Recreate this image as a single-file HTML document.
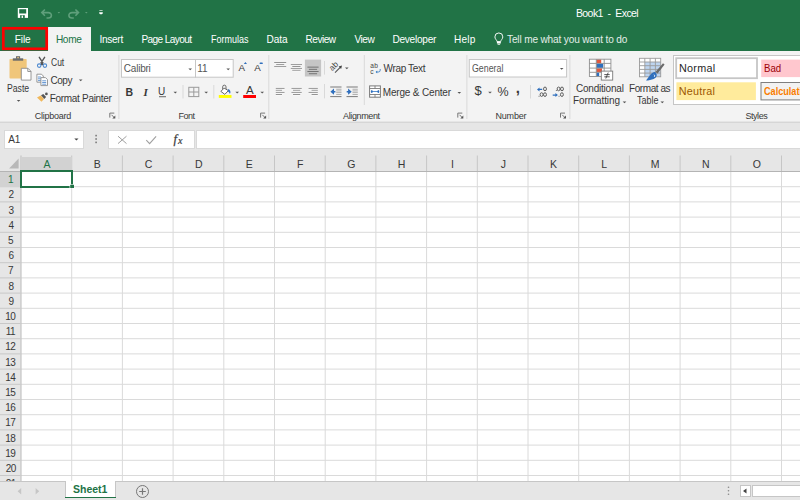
<!DOCTYPE html>
<html><head><meta charset="utf-8"><style>
*{margin:0;padding:0;box-sizing:border-box}
html,body{width:800px;height:500px;overflow:hidden}
body{position:relative;background:#fff;font-family:"Liberation Sans",sans-serif}
.a{position:absolute}
.t{position:absolute;white-space:pre;line-height:20px}
svg{position:absolute;left:0;top:0;overflow:visible}
</style></head><body>
<div class="a" style="left:0px;top:0px;width:800px;height:51px;background:#217346"></div>
<div class="t" style="left:575.90px;top:2.95px;font-size:10.5px;color:#ffffff;letter-spacing:-0.557px;">Book1  -  Excel</div>
<svg width="120" height="27">
<rect x="17.8" y="8" width="10.2" height="9.9" fill="#fff"/>
<rect x="19.2" y="9.2" width="7" height="4.3" fill="#217346"/>
<rect x="20.1" y="15.2" width="4.7" height="2.7" fill="#217346"/>
<rect x="21.6" y="15.6" width="1.4" height="2.3" fill="#fff"/>
<g fill="none" stroke="#5f9f7b" stroke-width="1.6">
<path d="M44.9 9.5L41.8 12.6L44.9 15.7M42 12.6H48.3A3.1 2.7 0 0 1 48.3 18H46.5"/>
<path d="M75.4 9.5L78.5 12.6L75.4 15.7M78.3 12.6H72A3.1 2.7 0 0 0 72 18H73.8"/>
</g>
<g fill="#5f9f7b"><path d="M57.6 12h2.6l-1.3 1.5z"/><path d="M85 12h2.6l-1.3 1.5z"/></g>
<g fill="#fff"><rect x="99.4" y="10.1" width="3.2" height="0.9" opacity="0.7"/><path d="M99.2 12.2h3.6v1.3l-1.8 1.1l-1.8-1.1z"/></g>
</svg>
<div class="a" style="left:48px;top:27px;width:43px;height:24px;background:#f3f3f3"></div>
<svg width="60" height="60"><rect x="3.3" y="28.3" width="43.4" height="20.5" fill="none" stroke="#ff0000" stroke-width="2.7"/></svg>
<div class="t" style="left:14.75px;top:29.99px;font-size:10.1px;color:#ffffff;letter-spacing:-0.117px;">File</div>
<div class="t" style="left:55.90px;top:29.99px;font-size:10.1px;color:#217346;letter-spacing:-0.333px;">Home</div>
<div class="t" style="left:99.40px;top:29.99px;font-size:10.1px;color:#ffffff;letter-spacing:-0.280px;">Insert</div>
<div class="t" style="left:141.40px;top:29.99px;font-size:10.1px;color:#ffffff;letter-spacing:-0.600px;">Page Layout</div>
<div class="t" style="left:210.51px;top:29.99px;font-size:10.1px;color:#ffffff;transform:scaleX(0.8927);transform-origin:0 0;">Formulas</div>
<div class="t" style="left:266.60px;top:29.99px;font-size:10.1px;color:#ffffff;letter-spacing:-0.067px;">Data</div>
<div class="t" style="left:305.60px;top:29.99px;font-size:10.1px;color:#ffffff;letter-spacing:-0.520px;">Review</div>
<div class="t" style="left:354.40px;top:29.99px;font-size:10.1px;color:#ffffff;letter-spacing:-0.467px;">View</div>
<div class="t" style="left:392.40px;top:29.99px;font-size:10.1px;color:#ffffff;letter-spacing:-0.250px;">Developer</div>
<div class="t" style="left:454.00px;top:29.99px;font-size:10.1px;color:#ffffff;letter-spacing:0.167px;">Help</div>
<div class="t" style="left:507.00px;top:29.99px;font-size:10.1px;color:#e4eee8;letter-spacing:-0.162px;">Tell me what you want to do</div>
<svg width="800" height="60"><g fill="none" stroke="#fff" stroke-width="0.95">
<path d="M497 41.6c-0.1-1.6-2.1-2.6-2.1-4.7a3.95 3.95 0 0 1 7.9 0c0 2.1-2 3.1-2.1 4.7z"/></g>
<rect x="496.9" y="41.8" width="3.9" height="1.7" fill="#fff"/><rect x="497.6" y="43.7" width="2.5" height="1.2" fill="#cfe0d6"/></svg>
<div class="a" style="left:0px;top:51px;width:800px;height:70px;background:#f3f3f3"></div>
<div class="a" style="left:0px;top:120.5px;width:800px;height:1px;background:#e6e6e6"></div>
<div class="a" style="left:0px;top:121.5px;width:800px;height:1px;background:#d6d6d6"></div>
<svg width="800" height="130">
<rect x="118.4" y="55" width="1" height="64" fill="#d9d9d9"/>
<rect x="268.3" y="55" width="1" height="64" fill="#d9d9d9"/>
<rect x="466.4" y="55" width="1" height="64" fill="#d9d9d9"/>
<rect x="569.4" y="55" width="1" height="64" fill="#d9d9d9"/>

<rect x="9.5" y="59" width="17.2" height="19.5" rx="0.8" fill="#f0c67a"/>
<rect x="12.8" y="58.3" width="10.4" height="2.4" fill="#6b6b6b"/>
<rect x="16" y="56.2" width="4.1" height="2.6" fill="#6b6b6b"/>
<rect x="17.3" y="57" width="1.5" height="1.2" fill="#f0c67a"/>
<path d="M21.3 68.3h6.7l3 3v8.8h-9.7z" fill="#fff" stroke="#8c8c8c" stroke-width="0.9"/>
<path d="M27.8 68.3v3.2h3.2" fill="none" stroke="#8c8c8c" stroke-width="0.9"/>

<path d="M16.80 100.00h3.6l-1.80 1.80z" fill="#555"/>

<g stroke="#555" stroke-width="1.4" fill="none" stroke-linecap="round"><path d="M39.3 57.3l3.6 5.6-1.6 1.6M44.6 57.3l-3.6 5.6 1.6 1.6"/></g>
<g stroke="#4b88cf" stroke-width="1.05" fill="none"><circle cx="39.2" cy="65.6" r="1.75"/><circle cx="44.9" cy="65.6" r="1.75"/></g>


<path d="M36.9 74.2h4.6l1.8 1.8v6.2h-6.4z" fill="#fff" stroke="#8c8c8c" stroke-width="0.9"/>
<g stroke="#5a8fcf" stroke-width="0.9"><path d="M38 77h3M38 78.8h3M38 80.6h3"/></g>
<path d="M40.9 77.6h4.6l2 2v6h-6.6z" fill="#fff" stroke="#8c8c8c" stroke-width="0.9"/>
<g stroke="#5a8fcf" stroke-width="0.9"><path d="M42.2 80.8h4M42.2 82.5h4M42.2 84.2h4"/></g>

<path d="M78.90 79.50h3.6l-1.80 1.80z" fill="#555"/>

<path d="M37 97.6L40.7 95.6L44 99L41.5 101.8Z" fill="#f0b85c"/>
<path d="M41 95.3L43.3 93.9L46.1 96.9L44.3 99.1Z" fill="#555"/>
<circle cx="46.4" cy="93.9" r="1.35" fill="#555"/>

<g fill="none" stroke="#777" stroke-width="1"><path d="M109.8 117.6v-4.5h4.5"/><path d="M111.5 114.8l3.2 3.2"/></g><path d="M115.3 115.6v3h-3z" fill="#555"/>
<rect x="121.5" y="59.5" width="74" height="17.7" fill="#fff" stroke="#c6c6c6" stroke-width="1"/>
<rect x="195.5" y="59.5" width="37.7" height="17.7" fill="#fff" stroke="#c6c6c6" stroke-width="1"/>
<path d="M188.40 68.40h3.6l-1.80 1.80z" fill="#555"/>
<path d="M226.40 68.40h3.6l-1.80 1.80z" fill="#555"/>
<path d="M243.8 63.9l1.6-1.9 1.6 1.9z" fill="#2f6fbd"/>
<rect x="259.6" y="62.6" width="3.2" height="1.4" rx="0.6" fill="#2f6fbd"/>
<rect x="159" y="96.3" width="7" height="0.9" fill="#555"/>
<path d="M173.50 91.70h3.6l-1.80 1.80z" fill="#555"/>
<path d="M204.40 91.70h3.6l-1.80 1.80z" fill="#555"/>
<path d="M235.40 91.70h3.6l-1.80 1.80z" fill="#555"/>
<path d="M260.40 91.70h3.6l-1.80 1.80z" fill="#555"/>
<rect x="182.5" y="85" width="1" height="13.5" fill="#d9d9d9"/><rect x="213.3" y="85" width="1" height="13.5" fill="#d9d9d9"/>
<g fill="none" stroke="#9a9a9a" stroke-width="1"><rect x="188.8" y="87.3" width="10" height="9.3"/><path d="M193.8 87.3v9.3M188.8 92h10"/></g>
<path d="M222.7 89.4V86.8A1.65 1.65 0 0 1 226 86.8V89.6" fill="none" stroke="#6a6a6a" stroke-width="1"/>
<path d="M220.9 91.4L224.1 88.1L228.4 90.6L224.8 94.4Z" fill="#fff" stroke="#666" stroke-width="1"/>
<path d="M228.2 88.9C230.2 89.6 231.2 91.6 229.9 94C229.3 92.6 228.7 91.7 227.9 91.3Z" fill="#2f6fbd"/>
<rect x="218.8" y="95" width="12.7" height="2.9" fill="#ffff00"/>
<rect x="243.2" y="95" width="12.8" height="3" fill="#ff0000"/>
<g fill="none" stroke="#777" stroke-width="1"><path d="M260.6 117.6v-4.5h4.5"/><path d="M262.3 114.8l3.2 3.2"/></g><path d="M266.1 115.6v3h-3z" fill="#555"/>
<rect x="274.2" y="62.05" width="12" height="0.95" fill="#8f8f8f"/>
<rect x="274.2" y="63.0" width="12" height="0.6" fill="#ffffff" opacity="0.7"/>
<rect x="276.2" y="64.14999999999999" width="8" height="0.95" fill="#8f8f8f"/>
<rect x="276.2" y="65.1" width="8" height="0.6" fill="#ffffff" opacity="0.7"/>
<rect x="274.2" y="66.14999999999999" width="12" height="0.95" fill="#8f8f8f"/>
<rect x="274.2" y="67.1" width="12" height="0.6" fill="#ffffff" opacity="0.7"/>
<rect x="290.8" y="64.14999999999999" width="11.2" height="0.95" fill="#8f8f8f"/>
<rect x="290.8" y="65.1" width="11.2" height="0.6" fill="#ffffff" opacity="0.7"/>
<rect x="292.3" y="66.05" width="8.2" height="0.95" fill="#8f8f8f"/>
<rect x="292.3" y="67.0" width="8.2" height="0.6" fill="#ffffff" opacity="0.7"/>
<rect x="290.8" y="67.95" width="11.2" height="0.95" fill="#8f8f8f"/>
<rect x="290.8" y="68.9" width="11.2" height="0.6" fill="#ffffff" opacity="0.7"/>
<rect x="292.3" y="69.85" width="8.2" height="0.95" fill="#8f8f8f"/>
<rect x="292.3" y="70.8" width="8.2" height="0.6" fill="#ffffff" opacity="0.7"/>
<rect x="304.9" y="59.6" width="16.2" height="16.9" fill="#c5c5c5"/>
<rect x="307.4" y="66.64999999999999" width="11.2" height="0.95" fill="#707070"/>
<rect x="308.9" y="68.85" width="8.2" height="0.95" fill="#707070"/>
<rect x="307.4" y="71.05" width="11.2" height="0.95" fill="#707070"/>
<rect x="308.9" y="73.25" width="8.2" height="0.95" fill="#707070"/>
<rect x="275.8" y="87.95" width="8.7" height="0.95" fill="#8f8f8f"/>
<rect x="275.8" y="88.9" width="8.7" height="0.6" fill="#ffffff" opacity="0.7"/>
<rect x="275.8" y="89.85" width="6.2" height="0.95" fill="#8f8f8f"/>
<rect x="275.8" y="90.8" width="6.2" height="0.6" fill="#ffffff" opacity="0.7"/>
<rect x="275.8" y="91.95" width="8.7" height="0.95" fill="#8f8f8f"/>
<rect x="275.8" y="92.9" width="8.7" height="0.6" fill="#ffffff" opacity="0.7"/>
<rect x="275.8" y="94.05" width="6.2" height="0.95" fill="#8f8f8f"/>
<rect x="275.8" y="95.0" width="6.2" height="0.6" fill="#ffffff" opacity="0.7"/>
<rect x="291.5" y="87.95" width="10.2" height="0.95" fill="#8f8f8f"/>
<rect x="291.5" y="88.9" width="10.2" height="0.6" fill="#ffffff" opacity="0.7"/>
<rect x="293" y="89.85" width="7.2" height="0.95" fill="#8f8f8f"/>
<rect x="293" y="90.8" width="7.2" height="0.6" fill="#ffffff" opacity="0.7"/>
<rect x="291.5" y="91.95" width="10.2" height="0.95" fill="#8f8f8f"/>
<rect x="291.5" y="92.9" width="10.2" height="0.6" fill="#ffffff" opacity="0.7"/>
<rect x="293" y="94.05" width="7.2" height="0.95" fill="#8f8f8f"/>
<rect x="293" y="95.0" width="7.2" height="0.6" fill="#ffffff" opacity="0.7"/>
<rect x="308.6" y="87.95" width="9.2" height="0.95" fill="#8f8f8f"/>
<rect x="308.6" y="88.9" width="9.2" height="0.6" fill="#ffffff" opacity="0.7"/>
<rect x="311.6" y="89.85" width="6.2" height="0.95" fill="#8f8f8f"/>
<rect x="311.6" y="90.8" width="6.2" height="0.6" fill="#ffffff" opacity="0.7"/>
<rect x="308.6" y="91.95" width="9.2" height="0.95" fill="#8f8f8f"/>
<rect x="308.6" y="92.9" width="9.2" height="0.6" fill="#ffffff" opacity="0.7"/>
<rect x="311.6" y="94.05" width="6.2" height="0.95" fill="#8f8f8f"/>
<rect x="311.6" y="95.0" width="6.2" height="0.6" fill="#ffffff" opacity="0.7"/>
<rect x="324" y="61" width="1" height="13.6" fill="#d9d9d9"/><rect x="324" y="84" width="1" height="14.4" fill="#d9d9d9"/>
<rect x="363.8" y="55" width="1" height="50" fill="#d9d9d9"/>
<text x="0" y="0" transform="translate(332.2,71.2) rotate(-45)" font-family="Liberation Sans" font-size="8.2" fill="#444">ab</text>
<path d="M335 72.6l5.2-5.2" stroke="#555" stroke-width="1.1"/><path d="M342 65.6l-3.4 0.9 2.5 2.5z" fill="#444"/>
<path d="M345.00 67.40h3.6l-1.80 1.80z" fill="#555"/>
<rect x="330.2" y="86.5" width="11.3" height="1" fill="#7a7a7a"/>
<rect x="330.2" y="96.1" width="11.3" height="1" fill="#7a7a7a"/>
<rect x="336.2" y="88.8" width="5.3" height="0.8" fill="#a0a0a0"/>
<rect x="336.2" y="90.55" width="5.3" height="0.8" fill="#a0a0a0"/>
<rect x="336.2" y="92.3" width="5.3" height="0.8" fill="#a0a0a0"/>
<rect x="336.2" y="94.05" width="5.3" height="0.8" fill="#a0a0a0"/>
<path d="M330.4 91.7L334.0 88.6V90.9H335.4V92.5H334.0V94.8Z" fill="#2f6fbd"/>
<rect x="346.5" y="86.5" width="11.3" height="1" fill="#7a7a7a"/>
<rect x="346.5" y="96.1" width="11.3" height="1" fill="#7a7a7a"/>
<rect x="352.5" y="88.8" width="5.3" height="0.8" fill="#a0a0a0"/>
<rect x="352.5" y="90.55" width="5.3" height="0.8" fill="#a0a0a0"/>
<rect x="352.5" y="92.3" width="5.3" height="0.8" fill="#a0a0a0"/>
<rect x="352.5" y="94.05" width="5.3" height="0.8" fill="#a0a0a0"/>
<path d="M351.7 91.7L348.1 88.6V90.9H346.7V92.5H348.1V94.8Z" fill="#2f6fbd"/>
<text x="370.2" y="67.9" font-family="Liberation Sans" font-size="6.6" fill="#444" letter-spacing="0.3">ab</text>
<text x="370.2" y="73.7" font-family="Liberation Sans" font-size="6.6" fill="#444">c</text>
<path d="M380.2 69v1.2a1.8 1.8 0 0 1-1.8 1.8h-2.4" fill="none" stroke="#3b7fc4" stroke-width="0.9"/><path d="M375.6 72l1.6-1.4v2.8z" fill="#3b7fc4"/>
<rect x="369.6" y="85.9" width="10.8" height="11.3" fill="#fff" stroke="#7a7a7a" stroke-width="1"/>
<path d="M369.6 88.5h10.8M369.6 94.5h10.8M375 85.9v2.6M375 94.5v2.7" stroke="#7a7a7a" stroke-width="0.9"/>
<path d="M372 91.5h6" stroke="#4b88cf" stroke-width="0.9"/>
<ellipse cx="371.8" cy="91.5" rx="0.9" ry="1.5" fill="#2f6fbd"/><ellipse cx="378.3" cy="91.5" rx="0.9" ry="1.5" fill="#2f6fbd"/>
<path d="M457.50 92.00h3.6l-1.80 1.80z" fill="#555"/>
<g fill="none" stroke="#777" stroke-width="1"><path d="M457.8 117.6v-4.5h4.5"/><path d="M459.5 114.8l3.2 3.2"/></g><path d="M463.3 115.6v3h-3z" fill="#555"/>
<rect x="469.3" y="59.5" width="97.3" height="17.5" fill="#fff" stroke="#c6c6c6" stroke-width="1"/>
<path d="M559.90 68.00h3.6l-1.80 1.80z" fill="#555"/>
<path d="M488.20 91.70h3.6l-1.80 1.80z" fill="#555"/>
<rect x="530" y="85" width="1" height="13.5" fill="#d9d9d9"/>
<g fill="none" stroke="#555" stroke-width="0.95">
<ellipse cx="545" cy="88.9" rx="1.45" ry="1.85"/><ellipse cx="541.6" cy="94.6" rx="1.45" ry="1.85"/><ellipse cx="545" cy="94.6" rx="1.45" ry="1.85"/>
<ellipse cx="558.6" cy="88.9" rx="1.45" ry="1.85"/><ellipse cx="562" cy="88.9" rx="1.45" ry="1.85"/><ellipse cx="561.9" cy="94.6" rx="1.45" ry="1.85"/></g>
<g fill="#555"><rect x="538.6" y="95.8" width="0.9" height="0.9"/><rect x="555.9" y="90.1" width="0.9" height="0.9"/><rect x="558.6" y="95.8" width="0.9" height="0.9"/></g>
<path d="M537 89.4l2.5-2v1.4h2.7v1.2h-2.7v1.4z" fill="#2f6fbd"/>
<path d="M557.9 95.1l-2.5-2v1.4h-2.7v1.2h2.7v1.4z" fill="#2f6fbd"/>
<g fill="none" stroke="#777" stroke-width="1"><path d="M560.5 117.6v-4.5h4.5"/><path d="M562.2 114.8l3.2 3.2"/></g><path d="M566 115.6v3h-3z" fill="#555"/>
<rect x="589.4" y="59.2" width="21.5" height="17.3" fill="#fff"/>
<rect x="596.4" y="59.4" width="4.8" height="3.8" fill="#e2583e"/>
<rect x="596.4" y="63.6" width="6.8" height="4.3" fill="#2f6fbd"/>
<rect x="596.4" y="68.3" width="5.6" height="3.8" fill="#e2583e"/>
<rect x="596.4" y="72.5" width="2.8" height="3.8" fill="#2f6fbd"/>
<g fill="none" stroke="#8f8f8f" stroke-width="0.9">
<rect x="589.4" y="59.2" width="21.5" height="17.3"/>
<path d="M596.3 59.2v17.3M604.2 59.2v17.3M589.4 63.4h21.5M589.4 68.1h21.5M589.4 72.3h21.5"/></g>
<rect x="601.3" y="71.1" width="11.4" height="9" fill="#fff" stroke="#7a7a7a" stroke-width="0.9"/>
<path d="M604.3 74.6h5.4M604.3 76.8h5.4M608.2 72.6l-2.4 5.9" stroke="#444" stroke-width="0.9"/>
<path d="M622.70 101.40h3.6l-1.80 1.80z" fill="#555"/>
<rect x="639.5" y="58.3" width="21.2" height="18.5" fill="#fff"/>
<rect x="645" y="62" width="15.7" height="14.8" fill="#bdd4ef"/>
<g fill="none" stroke="#9a9a9a" stroke-width="0.9">
<rect x="639.5" y="58.3" width="21.2" height="18.5"/>
<path d="M644.8 58.3v18.5M650.1 58.3v18.5M655.4 58.3v18.5M639.5 62h21.2M639.5 65.7h21.2M639.5 69.4h21.2M639.5 73.1h21.2"/></g>
<path d="M663 63.2L664.6 64.6L657.6 73.6L655.4 72Z" fill="#6a6a6a"/>
<path d="M655.2 72.2C657.4 73.6 657.6 77.3 653.6 78.9C651.6 79.7 648.6 80.2 646 80.6C647.5 78.6 649 76.4 650.6 74.6C652 73 653.6 71.8 655.2 72.2Z" fill="#2f6fbd"/>
<path d="M653.8 74.6C654.8 75 655 76.2 654 77" fill="none" stroke="#fff" stroke-width="0.9"/>
<path d="M660.50 101.40h3.6l-1.80 1.80z" fill="#555"/>
<rect x="673.5" y="55.5" width="140" height="49" fill="#fff" stroke="#c6c6c6" stroke-width="1"/>
<rect x="676.2" y="58.2" width="80.8" height="20" fill="#fff" stroke="#c6c6c6" stroke-width="1.8"/>
<rect x="761.2" y="59.6" width="60" height="17.5" fill="#ffc7ce"/>
<rect x="676.4" y="82.3" width="79.5" height="17.8" fill="#ffeb9c"/>
<rect x="761" y="82.5" width="60" height="17.4" fill="#f2f2f2" stroke="#7f7f7f" stroke-width="1"/>
</svg>
<div class="t" style="left:7.33px;top:79.03px;font-size:10px;color:#383838;transform:scaleX(0.8667);transform-origin:0 0;">Paste</div>
<div class="t" style="left:50.50px;top:53.23px;font-size:10px;color:#383838;transform:scaleX(0.8500);transform-origin:0 0;">Cut</div>
<div class="t" style="left:50.50px;top:70.53px;font-size:10px;color:#383838;letter-spacing:-0.467px;">Copy</div>
<div class="t" style="left:49.80px;top:88.53px;font-size:10px;color:#383838;letter-spacing:-0.315px;">Format Painter</div>
<div class="t" style="left:34.70px;top:105.98px;font-size:9px;color:#383838;letter-spacing:-0.250px;">Clipboard</div>
<div class="t" style="left:123.80px;top:58.63px;font-size:10px;color:#555;letter-spacing:-0.217px;">Calibri</div>
<div class="t" style="left:197.20px;top:58.63px;font-size:10px;color:#555;">11</div>
<div class="t" style="left:238.40px;top:58.10px;font-size:9.8px;color:#383838;">A</div>
<div class="t" style="left:254.20px;top:58.10px;font-size:9.8px;color:#383838;">A</div>
<div class="t" style="left:125.50px;top:81.95px;font-size:10.5px;color:#383838;font-weight:700;">B</div>
<div class="t" style="left:143.60px;top:81.78px;font-size:11px;color:#383838;font-weight:700;font-style:italic;font-family:'Liberation Serif';">I</div>
<div class="t" style="left:158.00px;top:81.73px;font-size:10px;color:#383838;">U</div>
<div class="t" style="left:246.00px;top:80.01px;font-size:11.5px;color:#383838;">A</div>
<div class="t" style="left:178.40px;top:105.98px;font-size:9px;color:#383838;letter-spacing:-0.467px;">Font</div>
<div class="t" style="left:383.50px;top:59.23px;font-size:10px;color:#383838;letter-spacing:-0.337px;">Wrap Text</div>
<div class="t" style="left:382.80px;top:82.73px;font-size:10px;color:#383838;letter-spacing:-0.177px;">Merge &amp; Center</div>
<div class="t" style="left:343.00px;top:105.98px;font-size:9px;color:#383838;letter-spacing:-0.375px;">Alignment</div>
<div class="t" style="left:472.20px;top:58.93px;font-size:10px;color:#555;transform:scaleX(0.8829);transform-origin:0 0;">General</div>
<div class="t" style="left:474.40px;top:81.49px;font-size:13px;color:#383838;">$</div>
<div class="t" style="left:497.60px;top:82.06px;font-size:12.5px;color:#383838;">%</div>
<div class="t" style="left:515.80px;top:78.39px;font-size:15px;color:#383838;font-weight:700;">,</div>
<div class="t" style="left:495.60px;top:105.98px;font-size:9px;color:#383838;letter-spacing:-0.240px;">Number</div>
<div class="t" style="left:575.90px;top:78.83px;font-size:10px;color:#383838;letter-spacing:-0.200px;">Conditional</div>
<div class="t" style="left:572.90px;top:91.43px;font-size:10px;color:#383838;letter-spacing:-0.067px;">Formatting</div>
<div class="t" style="left:629.00px;top:78.83px;font-size:10px;color:#383838;letter-spacing:-0.425px;">Format as</div>
<div class="t" style="left:636.50px;top:91.43px;font-size:10px;color:#383838;transform:scaleX(0.8958);transform-origin:0 0;">Table</div>
<div class="t" style="left:679.00px;top:58.15px;font-size:10.8px;color:#1f1f1f;letter-spacing:0.260px;">Normal</div>
<div class="t" style="left:763.81px;top:58.15px;font-size:10.8px;color:#9c0006;transform:scaleX(0.8944);transform-origin:0 0;">Bad</div>
<div class="t" style="left:678.80px;top:81.45px;font-size:10.8px;color:#9c5700;letter-spacing:0.233px;">Neutral</div>
<div class="t" style="left:764.00px;top:81.45px;font-size:10.8px;color:#fa7d00;font-weight:700;transform:scaleX(0.8448);transform-origin:0 0;">Calculation</div>
<div class="t" style="left:745.40px;top:105.98px;font-size:9px;color:#383838;letter-spacing:-0.440px;">Styles</div>
<div class="a" style="left:0px;top:122.5px;width:800px;height:33px;background:#e6e6e6"></div>
<div class="a" style="left:3.5px;top:129.5px;width:80.8px;height:19px;background:#fff;border:1px solid #d9d9d9"></div>
<div class="t" style="left:8.25px;top:129.93px;font-size:10px;color:#383838;letter-spacing:-0.250px;">A1</div>
<div class="a" style="left:107.5px;top:129.5px;width:87.5px;height:19px;background:#fff;border:1px solid #d9d9d9"></div>
<div class="a" style="left:196px;top:129.5px;width:604px;height:19px;background:#fff;border:1px solid #d9d9d9;border-right:none"></div>
<svg width="800" height="160">
<path d="M74.3 138.4h4.2l-2.1 2.1z" fill="#444"/>
<g fill="#7a7a7a"><rect x="95.3" y="134.8" width="1.6" height="1.6"/><rect x="95.3" y="138.2" width="1.6" height="1.6"/><rect x="95.3" y="141.6" width="1.6" height="1.6"/></g>
<path d="M118 136.2l8.5 7.4M126.5 136.2l-8.5 7.4" stroke="#a0a0a0" stroke-width="1"/>
<path d="M146.3 140.2l3.3 3.5 6.5-7.4" fill="none" stroke="#a0a0a0" stroke-width="1.1"/>
<text x="173.4" y="143.2" font-family="Liberation Serif" font-style="italic" font-size="12.5" fill="#3a3a3a" stroke="#3a3a3a" stroke-width="0.25">f</text>
<text x="177.9" y="143.6" font-family="Liberation Serif" font-style="italic" font-size="10" fill="#3a3a3a" stroke="#3a3a3a" stroke-width="0.2">x</text>
</svg>
<div class="a" style="left:0px;top:155.5px;width:800px;height:16px;background:#e6e6e6"></div>
<div class="a" style="left:0px;top:171px;width:20.5px;height:311px;background:#e6e6e6"></div>
<div class="a" style="left:21px;top:171.5px;width:779px;height:310px;background:#fff"></div>
<svg width="800" height="500">
<line x1="71.7" y1="171.5" x2="71.7" y2="481.5" stroke="#dadada" stroke-width="1"/>
<line x1="122.4" y1="171.5" x2="122.4" y2="481.5" stroke="#dadada" stroke-width="1"/>
<line x1="173.10000000000002" y1="171.5" x2="173.10000000000002" y2="481.5" stroke="#dadada" stroke-width="1"/>
<line x1="223.8" y1="171.5" x2="223.8" y2="481.5" stroke="#dadada" stroke-width="1"/>
<line x1="274.5" y1="171.5" x2="274.5" y2="481.5" stroke="#dadada" stroke-width="1"/>
<line x1="325.20000000000005" y1="171.5" x2="325.20000000000005" y2="481.5" stroke="#dadada" stroke-width="1"/>
<line x1="375.90000000000003" y1="171.5" x2="375.90000000000003" y2="481.5" stroke="#dadada" stroke-width="1"/>
<line x1="426.6" y1="171.5" x2="426.6" y2="481.5" stroke="#dadada" stroke-width="1"/>
<line x1="477.3" y1="171.5" x2="477.3" y2="481.5" stroke="#dadada" stroke-width="1"/>
<line x1="528.0" y1="171.5" x2="528.0" y2="481.5" stroke="#dadada" stroke-width="1"/>
<line x1="578.7" y1="171.5" x2="578.7" y2="481.5" stroke="#dadada" stroke-width="1"/>
<line x1="629.4000000000001" y1="171.5" x2="629.4000000000001" y2="481.5" stroke="#dadada" stroke-width="1"/>
<line x1="680.1" y1="171.5" x2="680.1" y2="481.5" stroke="#dadada" stroke-width="1"/>
<line x1="730.8000000000001" y1="171.5" x2="730.8000000000001" y2="481.5" stroke="#dadada" stroke-width="1"/>
<line x1="781.5" y1="171.5" x2="781.5" y2="481.5" stroke="#dadada" stroke-width="1"/>
<line x1="832.2" y1="171.5" x2="832.2" y2="481.5" stroke="#dadada" stroke-width="1"/>
<line x1="21" y1="186.7" x2="800" y2="186.7" stroke="#dadada" stroke-width="1"/>
<line x1="0" y1="186.7" x2="20.5" y2="186.7" stroke="#c8c8c8" stroke-width="1"/>
<line x1="21" y1="201.9" x2="800" y2="201.9" stroke="#dadada" stroke-width="1"/>
<line x1="0" y1="201.9" x2="20.5" y2="201.9" stroke="#c8c8c8" stroke-width="1"/>
<line x1="21" y1="217.1" x2="800" y2="217.1" stroke="#dadada" stroke-width="1"/>
<line x1="0" y1="217.1" x2="20.5" y2="217.1" stroke="#c8c8c8" stroke-width="1"/>
<line x1="21" y1="232.3" x2="800" y2="232.3" stroke="#dadada" stroke-width="1"/>
<line x1="0" y1="232.3" x2="20.5" y2="232.3" stroke="#c8c8c8" stroke-width="1"/>
<line x1="21" y1="247.5" x2="800" y2="247.5" stroke="#dadada" stroke-width="1"/>
<line x1="0" y1="247.5" x2="20.5" y2="247.5" stroke="#c8c8c8" stroke-width="1"/>
<line x1="21" y1="262.7" x2="800" y2="262.7" stroke="#dadada" stroke-width="1"/>
<line x1="0" y1="262.7" x2="20.5" y2="262.7" stroke="#c8c8c8" stroke-width="1"/>
<line x1="21" y1="277.9" x2="800" y2="277.9" stroke="#dadada" stroke-width="1"/>
<line x1="0" y1="277.9" x2="20.5" y2="277.9" stroke="#c8c8c8" stroke-width="1"/>
<line x1="21" y1="293.1" x2="800" y2="293.1" stroke="#dadada" stroke-width="1"/>
<line x1="0" y1="293.1" x2="20.5" y2="293.1" stroke="#c8c8c8" stroke-width="1"/>
<line x1="21" y1="308.29999999999995" x2="800" y2="308.29999999999995" stroke="#dadada" stroke-width="1"/>
<line x1="0" y1="308.29999999999995" x2="20.5" y2="308.29999999999995" stroke="#c8c8c8" stroke-width="1"/>
<line x1="21" y1="323.5" x2="800" y2="323.5" stroke="#dadada" stroke-width="1"/>
<line x1="0" y1="323.5" x2="20.5" y2="323.5" stroke="#c8c8c8" stroke-width="1"/>
<line x1="21" y1="338.7" x2="800" y2="338.7" stroke="#dadada" stroke-width="1"/>
<line x1="0" y1="338.7" x2="20.5" y2="338.7" stroke="#c8c8c8" stroke-width="1"/>
<line x1="21" y1="353.9" x2="800" y2="353.9" stroke="#dadada" stroke-width="1"/>
<line x1="0" y1="353.9" x2="20.5" y2="353.9" stroke="#c8c8c8" stroke-width="1"/>
<line x1="21" y1="369.1" x2="800" y2="369.1" stroke="#dadada" stroke-width="1"/>
<line x1="0" y1="369.1" x2="20.5" y2="369.1" stroke="#c8c8c8" stroke-width="1"/>
<line x1="21" y1="384.29999999999995" x2="800" y2="384.29999999999995" stroke="#dadada" stroke-width="1"/>
<line x1="0" y1="384.29999999999995" x2="20.5" y2="384.29999999999995" stroke="#c8c8c8" stroke-width="1"/>
<line x1="21" y1="399.5" x2="800" y2="399.5" stroke="#dadada" stroke-width="1"/>
<line x1="0" y1="399.5" x2="20.5" y2="399.5" stroke="#c8c8c8" stroke-width="1"/>
<line x1="21" y1="414.7" x2="800" y2="414.7" stroke="#dadada" stroke-width="1"/>
<line x1="0" y1="414.7" x2="20.5" y2="414.7" stroke="#c8c8c8" stroke-width="1"/>
<line x1="21" y1="429.9" x2="800" y2="429.9" stroke="#dadada" stroke-width="1"/>
<line x1="0" y1="429.9" x2="20.5" y2="429.9" stroke="#c8c8c8" stroke-width="1"/>
<line x1="21" y1="445.09999999999997" x2="800" y2="445.09999999999997" stroke="#dadada" stroke-width="1"/>
<line x1="0" y1="445.09999999999997" x2="20.5" y2="445.09999999999997" stroke="#c8c8c8" stroke-width="1"/>
<line x1="21" y1="460.3" x2="800" y2="460.3" stroke="#dadada" stroke-width="1"/>
<line x1="0" y1="460.3" x2="20.5" y2="460.3" stroke="#c8c8c8" stroke-width="1"/>
<line x1="21" y1="475.5" x2="800" y2="475.5" stroke="#dadada" stroke-width="1"/>
<line x1="0" y1="475.5" x2="20.5" y2="475.5" stroke="#c8c8c8" stroke-width="1"/>
<line x1="71.7" y1="155.5" x2="71.7" y2="171" stroke="#c6c6c6" stroke-width="1"/>
<line x1="122.4" y1="155.5" x2="122.4" y2="171" stroke="#c6c6c6" stroke-width="1"/>
<line x1="173.10000000000002" y1="155.5" x2="173.10000000000002" y2="171" stroke="#c6c6c6" stroke-width="1"/>
<line x1="223.8" y1="155.5" x2="223.8" y2="171" stroke="#c6c6c6" stroke-width="1"/>
<line x1="274.5" y1="155.5" x2="274.5" y2="171" stroke="#c6c6c6" stroke-width="1"/>
<line x1="325.20000000000005" y1="155.5" x2="325.20000000000005" y2="171" stroke="#c6c6c6" stroke-width="1"/>
<line x1="375.90000000000003" y1="155.5" x2="375.90000000000003" y2="171" stroke="#c6c6c6" stroke-width="1"/>
<line x1="426.6" y1="155.5" x2="426.6" y2="171" stroke="#c6c6c6" stroke-width="1"/>
<line x1="477.3" y1="155.5" x2="477.3" y2="171" stroke="#c6c6c6" stroke-width="1"/>
<line x1="528.0" y1="155.5" x2="528.0" y2="171" stroke="#c6c6c6" stroke-width="1"/>
<line x1="578.7" y1="155.5" x2="578.7" y2="171" stroke="#c6c6c6" stroke-width="1"/>
<line x1="629.4000000000001" y1="155.5" x2="629.4000000000001" y2="171" stroke="#c6c6c6" stroke-width="1"/>
<line x1="680.1" y1="155.5" x2="680.1" y2="171" stroke="#c6c6c6" stroke-width="1"/>
<line x1="730.8000000000001" y1="155.5" x2="730.8000000000001" y2="171" stroke="#c6c6c6" stroke-width="1"/>
<line x1="781.5" y1="155.5" x2="781.5" y2="171" stroke="#c6c6c6" stroke-width="1"/>
<line x1="832.2" y1="155.5" x2="832.2" y2="171" stroke="#c6c6c6" stroke-width="1"/>
<line x1="0" y1="171.5" x2="800" y2="171.5" stroke="#b4b4b4" stroke-width="1"/>
<line x1="21" y1="155.5" x2="21" y2="481.5" stroke="#c4c4c4" stroke-width="1.2"/>
<path d="M18.6 158.5v10h-9.5z" fill="#b8b8b8"/>
</svg>
<div class="a" style="left:21px;top:156.5px;width:51px;height:14.5px;background:#d2d2d2"></div>
<div class="a" style="left:0px;top:171.5px;width:20px;height:15px;background:#d2d2d2"></div>
<div class="t" style="left:43.45px;top:154.15px;font-size:10.5px;color:#217346;">A</div>
<div class="t" style="left:93.65px;top:154.15px;font-size:10.5px;color:#383838;">B</div>
<div class="t" style="left:144.85px;top:154.15px;font-size:10.5px;color:#383838;">C</div>
<div class="t" style="left:195.05px;top:154.15px;font-size:10.5px;color:#383838;">D</div>
<div class="t" style="left:245.75px;top:154.15px;font-size:10.5px;color:#383838;">E</div>
<div class="t" style="left:296.95px;top:154.15px;font-size:10.5px;color:#383838;">F</div>
<div class="t" style="left:347.15px;top:154.15px;font-size:10.5px;color:#383838;">G</div>
<div class="t" style="left:397.85px;top:154.15px;font-size:10.5px;color:#383838;">H</div>
<div class="t" style="left:451.05px;top:154.15px;font-size:10.5px;color:#383838;">I</div>
<div class="t" style="left:500.75px;top:154.15px;font-size:10.5px;color:#383838;">J</div>
<div class="t" style="left:549.95px;top:154.15px;font-size:10.5px;color:#383838;">K</div>
<div class="t" style="left:601.15px;top:154.15px;font-size:10.5px;color:#383838;">L</div>
<div class="t" style="left:650.85px;top:154.15px;font-size:10.5px;color:#383838;">M</div>
<div class="t" style="left:702.05px;top:154.15px;font-size:10.5px;color:#383838;">N</div>
<div class="t" style="left:752.75px;top:154.15px;font-size:10.5px;color:#383838;">O</div>
<div class="t" style="left:8.00px;top:170.13px;font-size:10px;color:#217346;">1</div>
<div class="t" style="left:8.50px;top:185.33px;font-size:10px;color:#383838;">2</div>
<div class="t" style="left:8.50px;top:200.53px;font-size:10px;color:#383838;">3</div>
<div class="t" style="left:8.50px;top:215.73px;font-size:10px;color:#383838;">4</div>
<div class="t" style="left:8.00px;top:230.93px;font-size:10px;color:#383838;">5</div>
<div class="t" style="left:8.50px;top:246.13px;font-size:10px;color:#383838;">6</div>
<div class="t" style="left:8.00px;top:261.33px;font-size:10px;color:#383838;">7</div>
<div class="t" style="left:8.50px;top:276.53px;font-size:10px;color:#383838;">8</div>
<div class="t" style="left:8.50px;top:291.73px;font-size:10px;color:#383838;">9</div>
<div class="t" style="left:5.30px;top:306.93px;font-size:10px;color:#383838;letter-spacing:-0.600px;">10</div>
<div class="t" style="left:5.80px;top:322.13px;font-size:10px;color:#383838;letter-spacing:-0.600px;">11</div>
<div class="t" style="left:5.30px;top:337.33px;font-size:10px;color:#383838;letter-spacing:-0.600px;">12</div>
<div class="t" style="left:5.30px;top:352.53px;font-size:10px;color:#383838;letter-spacing:-0.600px;">13</div>
<div class="t" style="left:5.30px;top:367.73px;font-size:10px;color:#383838;letter-spacing:-0.600px;">14</div>
<div class="t" style="left:5.30px;top:382.93px;font-size:10px;color:#383838;letter-spacing:-0.600px;">15</div>
<div class="t" style="left:5.30px;top:398.13px;font-size:10px;color:#383838;letter-spacing:-0.600px;">16</div>
<div class="t" style="left:5.30px;top:413.33px;font-size:10px;color:#383838;letter-spacing:-0.600px;">17</div>
<div class="t" style="left:5.30px;top:428.53px;font-size:10px;color:#383838;letter-spacing:-0.600px;">18</div>
<div class="t" style="left:5.30px;top:443.73px;font-size:10px;color:#383838;letter-spacing:-0.600px;">19</div>
<div class="t" style="left:5.80px;top:458.93px;font-size:10px;color:#383838;letter-spacing:-0.600px;">20</div>
<div class="t" style="left:5.80px;top:474.13px;font-size:10px;color:#383838;letter-spacing:-0.600px;">21</div>
<div class="a" style="left:20.3px;top:170px;width:52.8px;height:17.6px;border:2px solid #217346"></div>
<svg width="800" height="500"><rect x="69.6" y="184.3" width="4.6" height="3.8" fill="#fff"/><rect x="70.2" y="184.8" width="3.8" height="3.2" fill="#217346"/></svg>
<div class="a" style="left:0px;top:481.5px;width:800px;height:18.5px;background:#e6e6e6"></div>
<div class="a" style="left:0px;top:481px;width:800px;height:1.2px;background:#c6c6c6"></div>
<div class="a" style="left:65px;top:480.8px;width:51px;height:17.5px;background:#fff;border-left:1px solid #c6c6c6;border-right:1px solid #c6c6c6"></div>
<div class="a" style="left:65.2px;top:497px;width:50.8px;height:1.3px;background:#217346"></div>
<div class="t" style="left:73.00px;top:478.55px;font-size:10.5px;color:#217346;font-weight:700;">Sheet1</div>
<svg width="800" height="500"><g transform="translate(0,480)">
<circle cx="142.5" cy="11.5" r="6" fill="none" stroke="#777" stroke-width="1"/>
<path d="M142.5 8.2v6.6M139.2 11.5h6.6" stroke="#777" stroke-width="1.2"/>
<path d="M21.2 8l-3.6 3.2 3.6 3.2z" fill="#c6c6c6"/>
<path d="M35.6 8l3.6 3.2-3.6 3.2z" fill="#c6c6c6"/>
<g fill="#888"><circle cx="728.5" cy="7.3" r="0.8"/><circle cx="728.5" cy="10.8" r="0.8"/><circle cx="728.5" cy="14.3" r="0.8"/></g>
</g></svg>
<div class="a" style="left:739.5px;top:485px;width:11.5px;height:11.5px;background:#fff;border:1px solid #c6c6c6"></div>
<div class="a" style="left:751.5px;top:485px;width:60px;height:11.5px;background:#fff;border:1px solid #c6c6c6"></div>
<svg width="800" height="500"><path d="M746.5 488.5v5l-3.5-2.5z" fill="#444"/></svg>
</body></html>
